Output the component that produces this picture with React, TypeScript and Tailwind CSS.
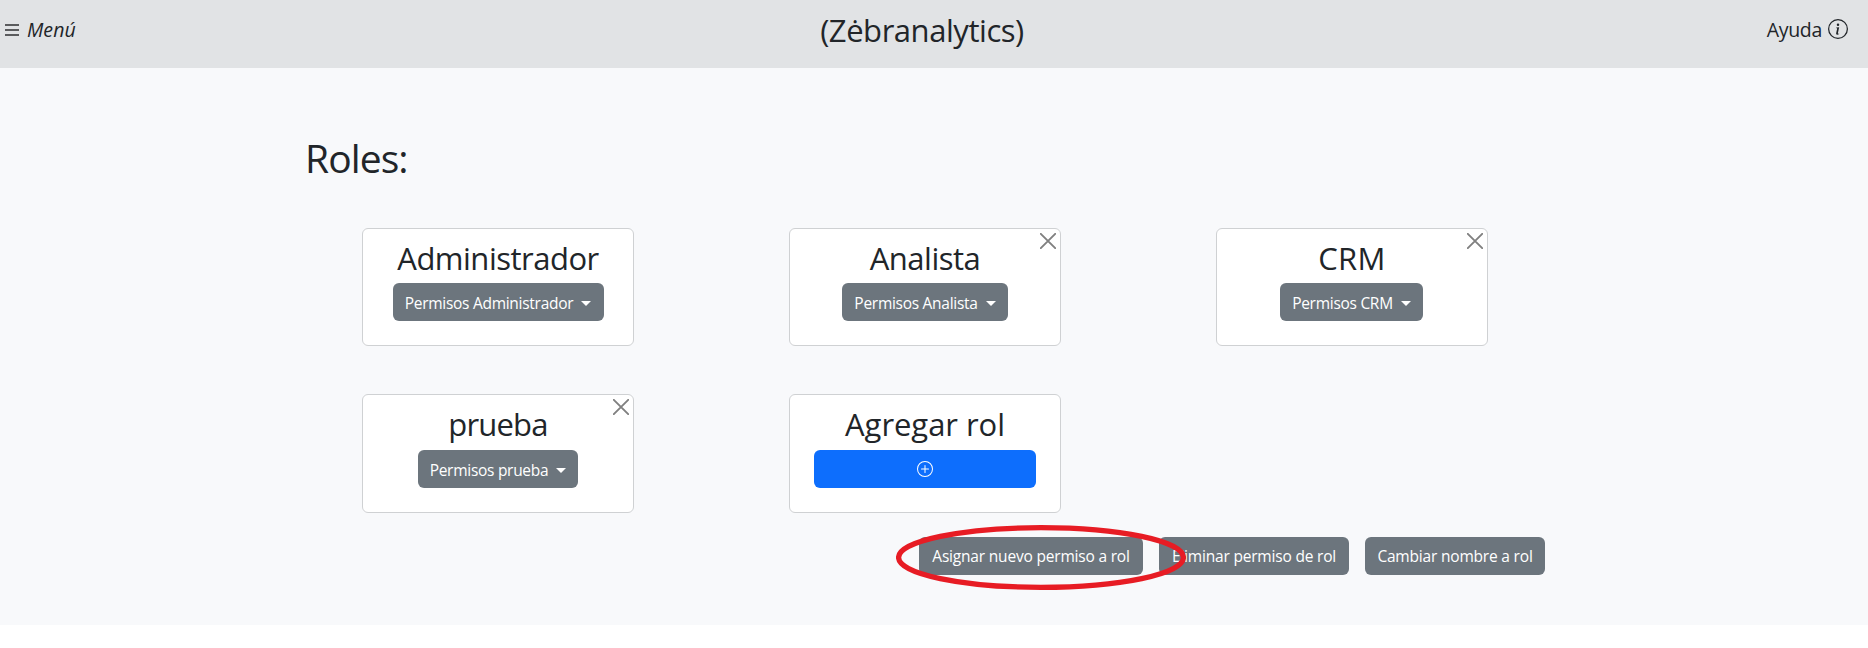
import React from "react";
import { BsInfoCircle, BsPlusCircle } from "react-icons/bs";

const Caret = () => (
  <span className="ml-[8px] h-0 w-0 border-x-[5px] border-t-[5px] border-x-transparent border-t-white" />
);

const Close = () => (
  <svg className="absolute top-[4px] right-[4px] h-4 w-4" viewBox="0 0 16 16" fill="none" stroke="#808080" strokeWidth="1.9" strokeLinecap="round">
    <path d="M.8.8l14.4 14.4M15.2.8L.8 15.2" />
  </svg>
);

function Card({ title, titleClass, children, closable = false, tall = false }: {
  title: string; titleClass: string; children: React.ReactNode; closable?: boolean; tall?: boolean;
}) {
  return (
    <div className={`relative flex w-[272px] flex-col items-center rounded-md border border-[#cfd1d3] bg-white ${tall ? "h-[119px] pt-[11px]" : "h-[118px] pt-[10px]"}`}>
      <h2 className={`h-[44px] text-[31px] whitespace-nowrap ${tall ? "leading-[36px]" : "leading-[38px]"} ${titleClass}`}>{title}</h2>
      {children}
      {closable && <Close />}
    </div>
  );
}

const btn = "flex h-[38px] shrink-0 items-center justify-center whitespace-nowrap rounded-md bg-[#6c757d] text-[15.5px] text-white";
const permission = `${btn} pt-[3px] tracking-[-0.28px]`;
const action = `${btn} pt-[2px] tracking-[-0.19px]`;

export default function App() {
  return (
    <div className="relative h-[648px] w-[1868px] overflow-hidden bg-white font-['Open_Sans',sans-serif] text-[#212529]">
      <header className="grid h-[68px] grid-cols-[1fr_240px_1fr] bg-[#e1e3e5] pr-[20px]">
        <div className="flex h-[60px] items-center pl-[5px]">
          <svg className="h-[14px] w-[14px]" viewBox="0 0 14 14" stroke="#5a5b5d" strokeWidth="2">
            <path d="M0 2h14M0 7h14M0 12h14" />
          </svg>
          <span className="ml-[8px] text-[19.5px] italic tracking-[0.05px]">Menú</span>
        </div>
        <h1 className="-ml-[4px] text-center text-[31px] leading-[60px] tracking-[-0.45px]">(Zėbranalytics)</h1>
        <div className="flex h-[58px] items-center justify-end gap-[6px] text-[19.5px]">
          <span className="pt-[2px] tracking-[-0.3px]">Ayuda</span>
          <BsInfoCircle className="h-5 w-5" />
        </div>
      </header>
      <main className="h-[557px] bg-[#f8f9fb]">
        <h1 className="h-[160px] pt-[65px] pl-[305px] text-[39px] leading-[50px] tracking-[-0.9px]">Roles:</h1>
        <div className="grid grid-cols-[repeat(3,272px)] gap-x-[155px] gap-y-[48px] pl-[362px]">
          <Card title="Administrador" titleClass="tracking-[-0.5px]">
            <button className={`${permission} w-[211px]`}><span>Permisos Administrador</span><Caret /></button>
          </Card>
          <Card title="Analista" titleClass="tracking-[-0.5px]" closable>
            <button className={`${permission} w-[166px]`}><span>Permisos Analista</span><Caret /></button>
          </Card>
          <Card title="CRM" titleClass="tracking-[0.3px]" closable>
            <button className={`${permission} mr-px w-[143px]`}><span>Permisos CRM</span><Caret /></button>
          </Card>
          <Card title="prueba" titleClass="tracking-[-0.8px]" closable tall>
            <button className={`${permission} w-[160px]`}><span>Permisos prueba</span><Caret /></button>
          </Card>
          <Card title="Agregar rol" titleClass="tracking-[-0.05px]" tall>
            <button className="flex h-[38px] w-[222px] items-center justify-center rounded-md bg-[#0d6efd] text-white">
              <BsPlusCircle className="h-4 w-4" />
            </button>
          </Card>
        </div>
        <div className="flex gap-4 pt-[24px] pl-[919px]">
          <button className={`${action} w-[224px]`}>Asignar nuevo permiso a rol</button>
          <button className={`${action} w-[190px]`}>Eliminar permiso de rol</button>
          <button className={`${action} w-[180px]`}>Cambiar nombre a rol</button>
        </div>
      </main>
      <svg className="absolute top-[525px] left-[896px] h-[65px] w-[290px]" viewBox="0 0 290 65" fill="none">
        <ellipse cx="145" cy="32.5" rx="142.4" ry="29.8" stroke="#e71c24" strokeWidth="5.3" />
      </svg>
    </div>
  );
}
